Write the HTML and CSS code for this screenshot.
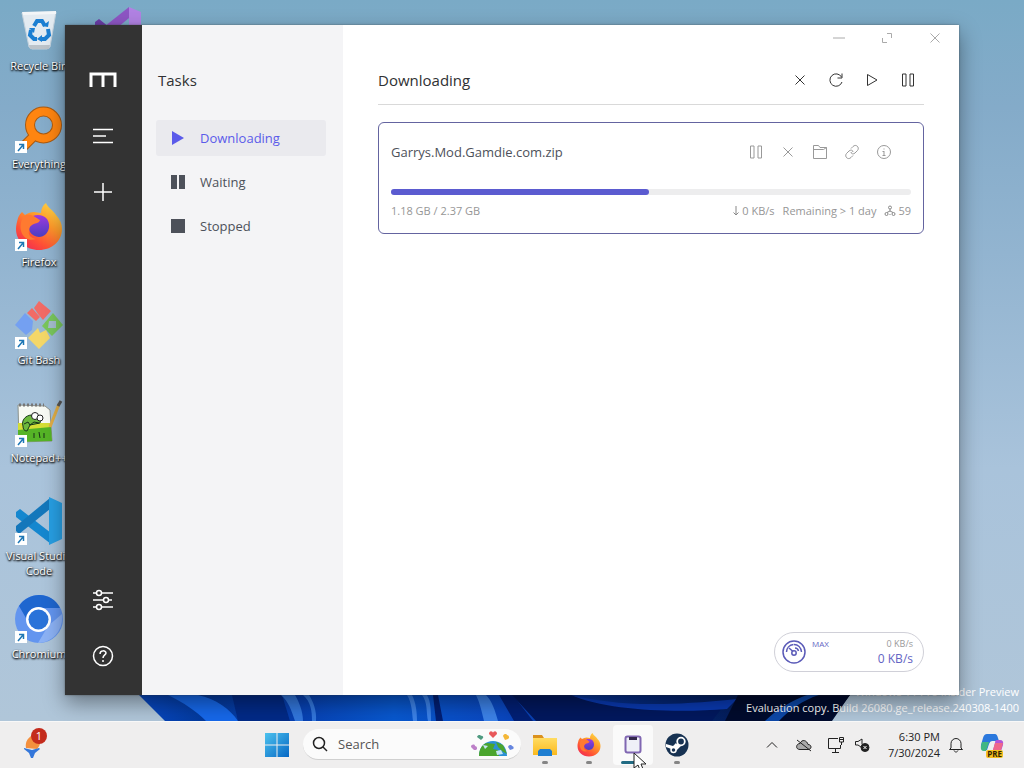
FILE: index.html
```
<!DOCTYPE html>
<html lang="en">
<head>
<meta charset="utf-8">
<meta name="viewport" content="width=device-width, initial-scale=1">
<title>Motrix - Downloading</title>
<link rel="stylesheet" href="styles.css">
</head>
<body>
<svg class="defs" aria-hidden="true">
  <defs>
    <linearGradient id="fxBody" x1="0.9" y1="0" x2="0.2" y2="1"><stop offset="0" stop-color="#ffe14a"/><stop offset=".4" stop-color="#ff9a2a"/><stop offset=".75" stop-color="#ff5036"/><stop offset="1" stop-color="#f02a55"/></linearGradient>
    <linearGradient id="fxCore" x1="0" y1="0" x2="0" y2="1"><stop offset="0" stop-color="#a03ae0"/><stop offset="1" stop-color="#4a3fc0"/></linearGradient>
    <linearGradient id="winLogo" x1="0" y1="0" x2="1" y2="1"><stop offset="0" stop-color="#4cc2ee"/><stop offset="1" stop-color="#0667c4"/></linearGradient>
    <linearGradient id="folder" x1="0" y1="0" x2="0" y2="1"><stop offset="0" stop-color="#ffdc62"/><stop offset="1" stop-color="#fbb91e"/></linearGradient>
  </defs>
  <symbol id="firefox" viewBox="0 0 48 48">
    <path fill="url(#fxBody)" d="M3 15c1-3 3-5 4-6l3 3c3-2 6-3 9-3l7 1c0-4 2-8 5-10 2 5 7 7 10 12 4 4 6 9 6 14 0 12-10 21-23 21S1 38 1 26c0-4 1-7 2-11z"/>
    <path fill="url(#fxCore)" d="M15 22c1-3 4-6 8-6l-5-3c4-2 11-1 14 3s3 11-1 15c-5 5-13 3-16-2-1-2-1-5 0-7z"/>
    <path fill="#ff7a30" d="M8 14c5-4 10-2 13 1l4 2c-1 4-6 3-8 5-3 2-3 4-3 6-1 4 2 7 7 8-11 4-20-8-13-22z"/>
  </symbol>
  <symbol id="shortcut" viewBox="0 0 12 12">
    <rect width="12" height="12" fill="#fff"/>
    <path d="M3 10l5-6M4 3.500h4.500V8" fill="none" stroke="#1e77b5" stroke-width="1.500"/>
  </symbol>
  <symbol id="cross" viewBox="0 0 16 16"><path d="M3.500 3.500l9 9M12.500 3.500l-9 9"/></symbol>
  <symbol id="bars" viewBox="0 0 16 16"><path d="M2.500 2h3.500v12H2.500zM10 2h3.500v12H10z"/></symbol>
</svg>

<div class="desktop">
  <main class="workspace">
    <svg class="wallpaper" viewBox="0 0 1024 721" preserveAspectRatio="none" aria-hidden="true">
      <defs>
        <linearGradient id="sky" x1="0" y1="0" x2="0" y2="1"><stop offset="0" stop-color="#7aaac6"/><stop offset=".15" stop-color="#84abc9"/><stop offset=".35" stop-color="#92b4d0"/><stop offset=".65" stop-color="#a9c3db"/><stop offset="1" stop-color="#b0c6d9"/></linearGradient>
        <linearGradient id="bloom" x1="0" y1="0" x2="1" y2="0"><stop offset="0" stop-color="#0b52dc"/><stop offset=".13" stop-color="#033a9e"/><stop offset=".25" stop-color="#073fb0"/><stop offset=".38" stop-color="#0858cf"/><stop offset=".52" stop-color="#0a47c0"/><stop offset=".7" stop-color="#052a80"/><stop offset="1" stop-color="#010a24"/></linearGradient>
      </defs>
      <rect width="1024" height="721" fill="url(#sky)"/>
      <path fill="url(#bloom)" d="M100 660h774l-42 61H165l-26-26z"/>
      <path fill="#1668ea" d="M168 695c16 8 28 16 38 26h32c-8-12-22-22-40-26z"/>
      <path fill="#022a87" d="M232 695h50l8 26h-52z"/>
      <path fill="#3276dc" d="M281 695c8 7 10 15 14 26h8c0-10-4-19-8-26zM303 695c8 7 9 16 9 26h4c1-10-3-20-7-26z"/>
      <path fill="#3c82e8" d="M407 695c5 8 5 18 6 26h4c0-9-1-18-5-26zM422 695c6 8 4 17 6 26h3c0-10 0-19-4-26zM476 695c4 8 6 18 8 26h14c-3-11-6-20-12-26z"/>
      <path fill="#021f75" d="M433 695h5l5 26h-7zM499 695h14l20 26h-19z"/>
      <path fill="#02185e" d="M512 695h60c22 8 45 11 70 13 40-1 60-3 86-8l-16 21H536z"/>
      <path fill="#0a3ab2" d="M571 695c40 9 80 13 166 4l-10 10c-50 4-120 2-156-14z"/>
      <path fill="#010b2d" d="M738 695h112l-20 26H725z"/>
      <path fill="#0d48a8" d="M765 721c12-12 28-21 42-26h12c-16 5-30 15-40 26z"/>
    </svg>

    <div class="shortcuts">
      <div class="column">
        <a class="shortcut" href="#recycle">
          <svg class="picture" viewBox="0 0 48 48" aria-hidden="true">
            <path fill="#e3ebf1" stroke="#c3d1dc" d="M7 6l34-1-6 35-3 2H17l-3-2z"/><path fill="#f3f6f8" d="M7 5l34-1v3L8 8z"/><path fill="#bcc4ca" d="M14 38h21l-1 4H15z"/>
            <path fill="none" stroke="#1b7fd2" stroke-width="4" d="M19 19l3-5h5l3 5M16 23l-1 5 4 4h3M33 22l1 6-4 4h-5"/><path fill="#1b7fd2" d="M27 19l6 1 1-6zM14 21l6 0-1 5zM27 28v7l-5-3z"/>
          </svg><span>Recycle Bin</span></a>
        <a class="shortcut" href="#everything">
          <svg class="picture" viewBox="0 0 48 48" aria-hidden="true">
            <path d="M20 30L7 43" stroke="#a85a12" stroke-width="10"/><circle cx="28.500" cy="20" r="13.500" fill="none" stroke="#a85a12" stroke-width="10"/>
            <path d="M20 30L7 43" stroke="#ff8510" stroke-width="8"/><circle cx="28.500" cy="20" r="13.500" fill="none" stroke="#ff8510" stroke-width="8"/>
            <use href="#shortcut" y="36" width="12" height="12"/></svg><span>Everything</span></a>
        <a class="shortcut" href="#firefox-app">
          <svg class="picture" viewBox="0 0 48 48" aria-hidden="true"><use href="#firefox" width="48" height="48"/><use href="#shortcut" y="36" width="12" height="12"/></svg><span>Firefox</span></a>
        <a class="shortcut" href="#gitbash">
          <svg class="picture" viewBox="0 0 48 48" aria-hidden="true">
            <path fill="#f16b66" d="M24 0l12 10-8 9-5-6-4-6zM17 7l8 9-4 4-9-8z"/><path fill="#74a0f1" d="M10 12l8 8-1 9-6 5L0 24z"/><path fill="#79c65c" d="M38 12l10 12-11 11-10-10z"/><path fill="#a5bdce" d="M34 20h7v7h-8z"/><path fill="#f4d768" d="M23 27l2 5 6-3 4 8-11 11-11-11z"/>
            <use href="#shortcut" y="36" width="12" height="12"/></svg><span>Git Bash</span></a>
        <a class="shortcut" href="#notepad">
          <svg class="picture" viewBox="0 0 48 48" aria-hidden="true">
            <path fill="#f8faf4" stroke="#8c928c" d="M3 6l27 1 5 4 2 31-33 1z"/><path fill="#d5de35" d="M3 24h32l1 8H3z"/><path fill="#55b426" d="M3 31l33-3 1 14-34 1z"/><path d="M4 6h25" stroke="#777" stroke-width="3" stroke-dasharray="2 2"/>
            <path fill="#6db93e" stroke="#17391a" d="M8 27c-2-6 3-11 9-11 6-1 10 3 8 8l-10 2-3 6c-3 0-4-2-4-5z"/><circle cx="20" cy="17" r="3.500" fill="#fff" stroke="#222"/><circle cx="25" cy="19" r="3" fill="#fff" stroke="#222"/><path d="M9 25l4-2 2 3 4-3 5 1M19 34v5M24 33l1 6M29 34v5" fill="none" stroke="#183018"/>
            <path d="M44 5L35 28" stroke="#e0ad45" stroke-width="3"/><path d="M46 2l-3 5" stroke="#555" stroke-width="3"/>
            <use href="#shortcut" y="36" width="12" height="12"/></svg><span>Notepad++</span></a>
        <a class="shortcut" href="#vscode">
          <svg class="picture" viewBox="0 0 48 48" aria-hidden="true">
            <path fill="#1587cf" d="M1 15l4-3 31 24v11L1 20z"/><path fill="#1477bb" d="M1 34l3 3 31-25V1L1 29z"/><path fill="#279ee2" d="M34 0l13 6v36l-13 6z"/>
            <use href="#shortcut" y="36" width="12" height="12"/></svg><span>Visual Studio Code</span></a>
        <a class="shortcut" href="#chromium">
          <svg class="picture" viewBox="0 0 48 48" aria-hidden="true">
            <circle cx="24" cy="24" r="24" fill="#6395ef"/><path fill="#1e66cf" d="M4 11C14-4 37-4 45 13H24L15 30z"/><path fill="#8cb2f5" d="M33 31L23 48c16 0 26-15 24-29z"/><circle cx="23.500" cy="24.500" r="12.500" fill="#fff"/><circle cx="23.500" cy="24.500" r="10" fill="#2a73d9"/>
            <use href="#shortcut" y="36" width="12" height="12"/></svg><span>Chromium</span></a>
      </div>
      <div class="column">
        <a class="shortcut" href="#vs" aria-label="Visual Studio">
          <svg class="picture" viewBox="0 0 48 48" aria-hidden="true"><path fill="#6a3da5" d="M0 15l4-3 30 24v10L0 20z"/><path fill="#8d56c4" d="M0 33l4 3 30-25V0L0 27z"/><path fill="#b182e3" d="M34 0l12 5v40l-12 3z"/></svg></a>
      </div>
    </div>

    <div class="watermark"><div>Windows 11 Pro Insider Preview</div><div>Evaluation copy. Build 26080.ge_release.240308-1400</div></div>

    <section class="window" aria-label="Motrix">
      <nav class="rail" aria-label="Main">
        <svg class="logo" viewBox="0 0 28 24" role="img" aria-label="Motrix"><path d="M2 19V6h24v13M14 6v13" fill="none" stroke="#fff" stroke-width="3"/></svg>
        <button aria-label="Task list"><svg viewBox="0 0 24 24"><path d="M2 5.500h20M2 12h13M2 18.500h20"/></svg></button>
        <button aria-label="Add task"><svg viewBox="0 0 24 24"><path d="M3 12h18M12 3v18"/></svg></button>
        <button class="bottom" aria-label="Preferences"><svg viewBox="0 0 24 24"><path d="M2 5h3M11 5h11M2 12h10M18 12h3M2 19h3M11 19h11"/><circle cx="8" cy="5" r="2.500"/><circle cx="15" cy="12" r="2.500"/><circle cx="8" cy="19" r="2.500"/></svg></button>
        <button aria-label="Help"><svg viewBox="0 0 24 24"><circle cx="12" cy="12" r="9.500"/><path d="M9 10c0-4 6-4 6-1 0 2-3 2-3 5M12 16v2"/></svg></button>
      </nav>

      <aside class="tasks">
        <h2>Tasks</h2>
        <ul>
          <li><a class="active" href="#downloading"><svg viewBox="0 0 16 16"><path d="M2 1l12 7-12 7z"/></svg>Downloading</a></li>
          <li><a href="#waiting"><svg viewBox="0 0 16 16"><path d="M1 1h6v14H1zM9 1h6v14H9z"/></svg>Waiting</a></li>
          <li><a href="#stopped"><svg viewBox="0 0 16 16"><path d="M1 1h14v14H1z"/></svg>Stopped</a></li>
        </ul>
      </aside>

      <div class="main">
        <div class="titlebar">
          <button aria-label="Minimize"><svg viewBox="0 0 16 16"><path d="M2 8h12"/></svg></button>
          <button aria-label="Maximize"><svg viewBox="0 0 16 16"><path d="M8 3.500h4.500V8M3.500 8v4.500H8"/></svg></button>
          <button aria-label="Close"><svg viewBox="0 0 16 16"><use href="#cross"/></svg></button>
        </div>
        <div class="content">
          <header class="heading">
            <h1>Downloading</h1>
            <div class="actions">
              <button aria-label="Delete selected"><svg viewBox="0 0 16 16"><use href="#cross"/></svg></button>
              <button aria-label="Refresh"><svg viewBox="0 0 16 16"><path d="M13.500 5A6.200 6.200 0 1 0 14 10M14 1.500V6H9.500"/></svg></button>
              <button aria-label="Resume all"><svg viewBox="0 0 16 16"><path d="M3.500 2.500v11l9.500-5.500z"/></svg></button>
              <button aria-label="Pause all"><svg viewBox="0 0 16 16"><use href="#bars"/></svg></button>
            </div>
          </header>
          <article class="card">
            <div class="card-top">
              <h3>Garrys.Mod.Gamdie.com.zip</h3>
              <div class="card-actions">
                <button aria-label="Pause"><svg viewBox="0 0 16 16"><use href="#bars"/></svg></button>
                <button aria-label="Remove"><svg viewBox="0 0 16 16"><use href="#cross"/></svg></button>
                <button aria-label="Open folder"><svg viewBox="0 0 16 16"><path d="M1.500 14.500v-13h5l1.500 2h6.500v11zM1.500 5.500h10l3-2"/></svg></button>
                <button aria-label="Copy link"><svg viewBox="0 0 16 16"><path d="M7 4.500l2-2c3-3 7 1 4.500 4l-2.500 2.500c-1.500 1.500-4 1-4-1M9 11.500l-2 2c-3 3-7-1-4.500-4L5 7c1.500-1.500 4-1 4 1"/></svg></button>
                <button aria-label="Details"><svg viewBox="0 0 16 16"><circle cx="8" cy="8" r="6.500"/><path d="M8 7v4.500M8 4.500v1M6.500 7.500H8M6.500 11.500h3"/></svg></button>
              </div>
            </div>
            <div class="progress" role="progressbar" aria-label="Downloaded" aria-valuenow="50" aria-valuemin="0" aria-valuemax="100"><div class="progress-value" style="width: 49.6%"></div></div>
            <div class="card-info">
              <span>1.18 GB / 2.37 GB</span>
              <div class="stats">
                <span><svg class="arrow" viewBox="0 0 8 12"><path d="M4 1v9M1.500 7.500L4 10l2.500-2.500"/></svg>0 KB/s</span>
                <span>Remaining &gt; 1 day</span>
                <span><svg class="peers" viewBox="0 0 12 12"><circle cx="6" cy="2.500" r="1.500"/><circle cx="2.500" cy="9" r="1.500"/><circle cx="9.500" cy="9" r="1.500"/><path d="M6 4v2M3 7.500L6 6l3 1.500M5.500 9.500h1"/></svg>59</span>
              </div>
            </div>
          </article>
          <button class="speed">
            <svg viewBox="0 0 24 24"><circle cx="12" cy="12" r="11"/><path d="M4.500 12c0-4 3-7 7-7.500M12 4.500c4 0 7 3 7.500 7.500M7 8l4 3.500M13 8c2 0 3 1 3.500 3"/><circle cx="12" cy="13" r="2.200"/></svg>
            <span class="mode">MAX</span>
            <span class="rates"><span>0 KB/s</span><span class="rate-down">0 KB/s</span></span>
          </button>
        </div>
      </div>
    </section>
  </main>

  <footer class="taskbar">
    <div class="bar-left">
      <button class="widget" aria-label="Widgets, 1 new">
        <svg viewBox="0 0 26 30"><path fill="#f4903e" d="M6 18c-1-5 1-9 5-12l8 2c2 4 1 8-2 11z"/><path fill="#3477da" d="M4 18l8 2 7-2 1 1-5 4-2 5h-2l-2-5-5-4z"/></svg><span class="badge">1</span>
      </button>
    </div>
    <div class="bar-apps">
      <button class="app" aria-label="Start"><svg viewBox="0 0 24 24"><path fill="url(#winLogo)" d="M0 0h11.500v11.500H0zM12.500 0H24v11.500H12.500zM0 12.500h11.500V24H0zM12.500 12.500H24V24H12.500z"/></svg></button>
      <label class="search">
        <svg class="lens" viewBox="0 0 16 16"><circle cx="7" cy="7" r="5.500"/><path d="M11 11l4 4"/></svg>
        <input type="text" placeholder="Search" aria-label="Search">
        <svg class="earth" viewBox="0 0 44 26" aria-hidden="true"><path fill="#2c90d5" d="M8 25c0-20 28-20 28 0z"/><path fill="#4ba52e" d="M8 25c0-8 4-12 8-13l8 1-2 5 5 1 1 6zM25 11l7 3 4 9-5-3-4-4z"/><path fill="#c5e6f6" d="M12 14l5 1-3 3zM25 20l5-1 2 4-6 1z"/><path fill="#e8585a" d="M22 7l-4-4c0-4 4-3 4-1 0-2 4-3 4 1z"/><path fill="#4f9a80" d="M10 9L6 6c1-3 4-2 4-1 1-1 3 1 2 2z"/><path fill="#f4b738" d="M34 9l-2-4c1-3 4-2 4-1 2 0 3 3 1 4z"/><path fill="#bd80c8" d="M3 19l-3-3c0-3 4-3 4-1 2 0 3 3 1 4z"/><path fill="#6686df" d="M39 19l-2-3c1-3 4-2 4-1 2 0 2 3 1 3z"/></svg>
      </label>
      <button class="app running" aria-label="File Explorer"><svg viewBox="0 0 24 24"><path fill="#db911d" d="M0 2h9l2 3v5H0z"/><path fill="url(#folder)" d="M0 5h24v17H0z"/><path fill="#1f7ed1" d="M5 18l2-2h10l2 2v5H5z"/></svg></button>
      <button class="app running" aria-label="Firefox"><svg viewBox="0 0 48 48"><use href="#firefox" width="48" height="48"/></svg></button>
      <button class="app running current" aria-label="Motrix"><svg viewBox="0 0 24 24"><rect x="4.500" y="3.500" width="15" height="16" rx="2" fill="#eff0f8" stroke="#8067b2" stroke-width="2"/><path fill="#33284c" d="M8 4h8v3H8z"/></svg>
        <svg class="cursor" viewBox="0 0 13 20" aria-hidden="true"><path d="M1 1v15l4-3 2 5 3-1-2-5h5z" fill="#fff" stroke="#222"/></svg></button>
      <button class="app running" aria-label="Steam"><svg viewBox="0 0 24 24"><circle cx="12" cy="12" r="11.500" fill="#173252"/><path fill="#fff" d="M1 14l8 3 5-3-3-4-3 3-7-2z"/><path d="M9 17l6-6" stroke="#fff" stroke-width="4"/><circle cx="16" cy="8.500" r="3.800" fill="#173252" stroke="#fff" stroke-width="1.800"/><circle cx="8.500" cy="17" r="2.500" fill="#173252" stroke="#fff" stroke-width="1.500"/></svg></button>
    </div>
    <div class="tray">
      <button aria-label="Show hidden icons"><svg viewBox="0 0 16 16"><path d="M3 10.500l5-5 5 5"/></svg></button>
      <button aria-label="OneDrive"><svg viewBox="0 0 16 16"><path fill="#aaa" d="M4 12.500c-5 0-4-6 0-6 2-5 7-3 8 1 4 0 4 5 0 5zM1 3l14 11"/></svg></button>
      <button aria-label="Network"><svg viewBox="0 0 16 16"><path d="M10 1.500H.5v10h12V8M4 15.500h7M7.500 12v3M11.500.5h4V5h-4zM13.500 5v3M11.500 2.500h4"/></svg></button>
      <button aria-label="Sound muted"><svg viewBox="0 0 16 16"><path d="M7 10L4 8H1.500V4.500H4L8 2v5"/><circle cx="11" cy="10.500" r="4" fill="#222"/><path stroke="#fff" d="M9.500 9l3 3M12.500 9l-3 3"/></svg></button>
      <button class="clock"><time>6:30 PM</time><time>7/30/2024</time></button>
      <button aria-label="Notifications"><svg viewBox="0 0 16 16"><path d="M3 11V6.500a5 5 0 0 1 10 0V11l1.500 1.500h-13zM6 13.500c1 2 3 2 4 0"/></svg></button>
      <button class="copilot" aria-label="Copilot preview"><svg viewBox="0 0 24 24"><path fill="#2b78dd" d="M7 1h8q2 0 3 4l1 3h-7q-2 0-3 3l-2 6H5q-5 0-4-5l2-7q1-4 4-4z"/><path fill="#42b783" d="M2 9h7l-3 9H4q-4 0-3-5z"/><path fill="#b454d7" d="M17 7h3q4 0 3 5l-2 6q-1 4-4 4h-7q2-1 3-5l2-7q0-3 2-3z"/><path fill="#ef668a" d="M15 10h8l-2 7h-8z"/></svg><span>PRE</span></button>
    </div>
  </footer>
</div>
</body>
</html>
```
FILE: styles.css
```
* { box-sizing: border-box; }

body {
  margin: 0;
  font-family: "Open Sans", "Noto Sans", sans-serif;
  font-size: 12px;
  color: #303133;
}

button {
  display: flex;
  align-items: center;
  justify-content: center;
  margin: 0;
  padding: 0;
  border: 0;
  background: none;
  color: inherit;
  font: inherit;
}

a { color: inherit; text-decoration: none; }
h1, h2, h3, ul { margin: 0; padding: 0; font-weight: 400; list-style: none; }
svg { flex: none; }
.defs { position: absolute; width: 0; height: 0; }

.desktop { display: flex; flex-direction: column; height: 100vh; overflow: hidden; }
.workspace { position: relative; flex: 1; min-height: 0; overflow: hidden; }
.wallpaper { position: absolute; inset: 0; width: 100%; height: 100%; }

.shortcuts { position: relative; display: flex; gap: 4px; padding: 7px 0 0 1px; }
.column { width: 76px; }
.shortcut {
  display: flex;
  flex-direction: column;
  align-items: center;
  gap: 3px;
  height: 98px;
  color: #fff;
  font-size: 11px;
  line-height: 15px;
  text-align: center;
  text-shadow: 0 1px 2px #000, 1px 1px 2px #000;
}
.picture { width: 48px; height: 48px; }

.watermark {
  position: absolute;
  right: 5px;
  bottom: 5px;
  color: #fff;
  font-size: 11px;
  line-height: 16px;
  text-align: right;
}

.window {
  position: absolute;
  inset: 25px 65px 26px 65px;
  display: flex;
  background: #fff;
  box-shadow: 0 0 2px #3338, 0 8px 20px #0006;
}

.rail {
  display: flex;
  flex-direction: column;
  align-items: center;
  gap: 32px;
  width: 77px;
  padding: 43px 1px 27px 0;
  background: #333;
}
.rail .logo { width: 28px; height: 24px; }
.rail button, .rail button svg { width: 24px; height: 24px; }
.rail button svg { fill: none; stroke: #fff; stroke-width: 1.5; }
.rail .bottom { margin-top: auto; }

.tasks { width: 201px; padding: 43px 17px 0 14px; background: #f4f4f6; }
.tasks h2 { padding-left: 2px; font-size: 15px; line-height: 24px; }
.tasks ul { display: grid; gap: 8px; padding-top: 28px; }
.tasks a {
  display: flex;
  align-items: center;
  gap: 14px;
  height: 36px;
  padding-left: 14px;
  border-radius: 3px;
  color: #4d515a;
  font-size: 13px;
}
.tasks svg { width: 16px; height: 16px; fill: #4d515a; }
.tasks .active { background: #eaeaee; color: #5b5bea; }
.tasks .active svg { fill: #5b5bea; }

.main { display: flex; flex: 1; flex-direction: column; min-width: 0; }
.titlebar { display: flex; justify-content: flex-end; height: 26px; }
.titlebar button { width: 48px; }
.titlebar svg, .actions svg, .card-actions svg { width: 16px; height: 16px; fill: none; stroke: currentColor; stroke-width: 1; }
.titlebar button { color: #aaa; }
.content { display: flex; flex: 1; flex-direction: column; padding: 0 35px 23px; }
.heading {
  display: flex;
  align-items: center;
  justify-content: space-between;
  height: 54px;
  padding: 5px 8px 0 0;
  border-bottom: 1px solid #d9d9d9;
}
.heading h1 { font-size: 15px; }
.actions { display: flex; gap: 20px; color: #333; }

.card {
  margin-top: 17px;
  padding: 17px 12px 14px;
  border: 1px solid #6464a0;
  border-radius: 6px;
}
.card-top { display: flex; align-items: center; justify-content: space-between; padding-right: 19px; }
.card h3 { color: #4d515a; font-size: 13px; line-height: 24px; }
.card-actions { display: flex; gap: 16px; color: #999; }
.progress { height: 6px; margin-top: 25px; border-radius: 3px; background: #ededee; }
.progress-value { height: 100%; border-radius: 3px; background: #5b5bd0; }
.card-info, .stats { display: flex; align-items: center; justify-content: space-between; }
.card-info { margin-top: 8px; color: #969696; font-size: 11px; line-height: 16px; }
.stats { gap: 8px; }
.stats span { display: flex; align-items: center; gap: 2px; }
.stats svg { fill: none; stroke: #888; }
.arrow { width: 8px; height: 12px; }
.peers { width: 12px; height: 12px; }

.speed {
  justify-content: flex-start;
  align-items: center;
  align-self: flex-end;
  gap: 6px;
  width: 150px;
  height: 40px;
  margin-top: auto;
  padding: 0 10px 0 7px;
  border: 1px solid #d0d0d8;
  border-radius: 20px;
  color: #6464c4;
}
.speed svg { width: 24px; height: 24px; fill: none; stroke: #5b5bb8; stroke-width: 1.5; }
.mode { align-self: flex-start; padding-top: 5px; font-size: 8px; line-height: 12px; }
.rates { display: grid; margin-left: auto; text-align: right; color: #999; font-size: 9px; line-height: 14px; }
.rate-down { color: #6464c4; font-size: 12px; line-height: 16px; }

.taskbar { display: flex; align-items: center; height: 47px; background: #efeeee; box-shadow: inset 0 1px #f8f8f8; }
.bar-left { flex: 0 1 254px; padding-left: 20px; }
.widget { position: relative; width: 26px; height: 34px; }
.widget svg { width: 26px; height: 30px; }
.badge {
  position: absolute;
  top: 0;
  right: -1px;
  width: 16px;
  height: 16px;
  border-radius: 50%;
  background: #c42b1c;
  color: #fff;
  font-size: 11px;
  line-height: 16px;
}
.bar-apps { display: flex; align-items: center; gap: 4px; }
.app { position: relative; width: 40px; height: 40px; border-radius: 4px; }
.app svg { width: 24px; height: 24px; }
.app:first-child { width: 45px; }
.running::after { content: ""; position: absolute; bottom: 1px; width: 6px; height: 3px; border-radius: 2px; background: #858585; }
.current { background: #fafafa; }
.current::after { width: 16px; left: 8px; background: #216b83; }
.app .cursor { position: absolute; z-index: 1; top: 27px; left: 20px; width: 13px; height: 20px; }
.search {
  display: flex;
  align-items: center;
  gap: 10px;
  width: 218px;
  height: 31px;
  padding: 0 6px 0 9px;
  border-bottom: 1px solid #d0d0d0;
  border-radius: 16px;
  background: #fbfbfb;
}
.search input { flex: 1; min-width: 0; padding: 0; border: 0; outline: 0; background: none; color: #555; font: inherit; font-size: 13px; }
.search input::placeholder { color: #555; opacity: 1; }
.lens { width: 16px; height: 16px; fill: none; stroke: #222; stroke-width: 1.5; }
.search .earth { width: 44px; height: 26px; }

.tray { display: flex; align-items: center; margin-left: auto; padding-right: 20px; color: #222; }
.tray button { width: 32px; height: 40px; }
.tray svg { width: 16px; height: 16px; fill: none; stroke: #222; stroke-width: 1; }
.tray button:nth-child(4) { width: 20px; }
.tray .clock { flex-direction: column; align-items: flex-end; width: 68px; font-size: 11px; line-height: 16px; }
.tray .copilot { position: relative; width: 24px; margin-left: 8px; }
.tray .copilot svg { width: 24px; height: 24px; stroke: none; }
.copilot span { position: absolute; right: 1px; bottom: 7px; padding: 0 1px; border-radius: 2px; background: #f5bf21; color: #302400; font-size: 8px; font-weight: 700; line-height: 8px; }
```
